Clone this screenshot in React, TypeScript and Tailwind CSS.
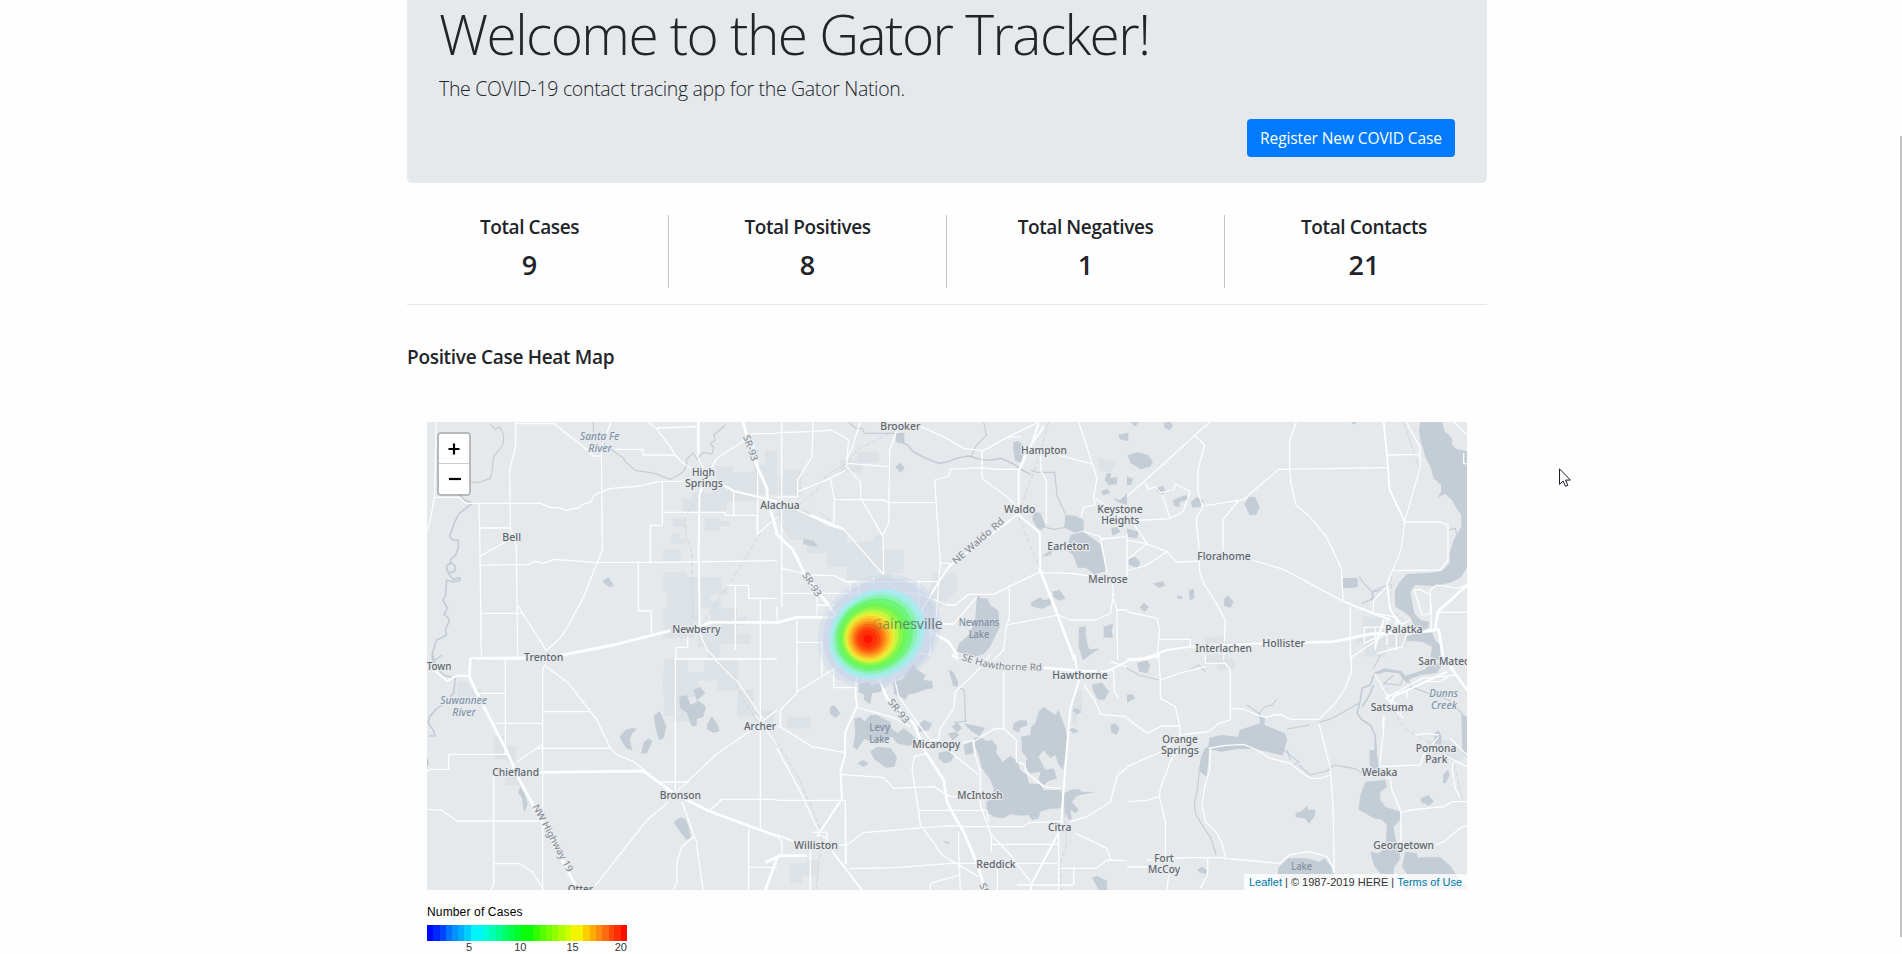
import React from "react";

type Label = [text: string, x: number, y: number, width: number, kind?: "water" | "lake"];

interface Tile {
  x: number;
  y: number;
  urban: string;
  water: string;
  rivers: string;
  streams: string;
  rails: string;
  minor: string;
  medium: string;
  major: string;
}

// Tile geometry is stored at three units per screen pixel.
const tiles: Tile[] = [
  {
    x: 0,
    y: 0,
    urban:
      "M868 138h50v18h62v-22h70v90h-60v20h-90v28h-60v-24h-45v-30h60v-40h13zM765 235h100v40h-100zM737 293h38v28h-38zM735 340h20v15h20v16h-45v-16h5zM833 293h42v10h35v16h-32v14h-45zM709 388h52v35h-52zM709 457h70v14h105v32h20v20h-55v20h32v22h-60v40h-20v50h-92v-90h12v-50h-12zM850 565h80v25h30v26h-30v26h40v30h-90v40h-38v-30h-30v-50h38zM1015 90h35v60h-35z",
    water: "M525 484l12-8l10-4l3 10l8 8v10h-14l-6-6z",
    rivers:
      "M100 225l8 12l27 13l-40 32l-12 25l-15 42l8 10l18 2v22l-8 22l-14 12l-2 12l-12 10l2 15l12 5l13-8l-2-14l-8-8l-12 4l-4 10l6 18l14 18l20-6v8l-22 5l-18-6l-4 50l-8 10l14 24l-10 20l16 12l-2 12l-10 20l3 18l-30 15l-12 40l8 30",
    streams:
      "M130 186l25 1l35-12l5-20l5-45l28-35l2-30l-12-25l-12 8l-16-14M498 6l2 34l40 40l50 35l5 10l30 26l40 6l20 4l45 17l20-10l20-14l10-20l-2-15l20-20l12 18l20-20l25 5l5-20l-10-12l15-10l-5-15l35-30",
    rails: "M830 215L790 265L775 300L778 350L795 400L797 590L815 615M1050 285L990 352L960 405L940 440L830 605L818 645L840 690L862 715",
    minor:
      "M0 335L12 290L22 232L28 6M22 232H98L115 250H155L158 325L163 710M115 250H340L370 262L395 263L418 272L430 267L455 264L465 254L492 245L500 228L512 220L548 206L640 198L680 188L706 184H800M266 6V80L248 150L250 325L268 380L272 710M158 324H250M160 408L250 358M162 436L305 433L325 424L350 430L380 418L425 421L500 427H700L1050 422M162 580H286M272 556L358 692L405 648L425 615L470 530L510 430L526 390L523 80L552 6M266 11H382L430 50L455 68L500 108H520M565 88H648V105H742M665 6L690 28L730 80L745 105L765 127L830 170M690 24L810 20M812 6V110L840 170M840 170L855 140L870 115L950 62L975 41H1050M706 184V316H670V427M706 277H893L895 286H990V340M634 430V573H673V640M920 213V284M992 340V130L975 60M900 496H965V535H1050M925 496V690M1000 535V710M782 650V682H747V720M990 345L1050 290M818 640L840 690L870 720",
    medium: "M815 6V100M860 180L920 213L1020 237L1050 245M825 200L817 230L815 400L818 600L815 625M145 716H300",
    major: "M818 620L850 607H1050M730 632L560 675L380 710M948 6L975 105L1020 205L1022 240L1050 338",
  },
  {
    x: 1050,
    y: 0,
    urban:
      "M20 150h55v75h-70v-55h15zM190 120h50v-25h65v32h-50v30h-65zM0 270h90l60 50l60 10v35h80v-20h30v45h60v70h-40v20h-130v-40h-60v-40h-60v-40h-50l-30-50zM470 460h70v50l-60 60h-40zM960 112l55 15l-12 30l-35-5z",
    water:
      "M357 40l25-2v30l-18 2l-8-8zM355 140l14-12l14 15l-12 16zM708 68l14-6l14 10v20l8 14l-12 22l-18-6l-5-30zM770 275l20 4l16 40l-14 12l-12-8l-14-25zM866 284l30 4l24 12v30l-25 8l-34-15zM880 345l40-10l50 38l18 80l-36 10l-26-20h-24l-12-34l-20-20zM795 410l20-16l14-5l-8 16zM600 526l12 8l20 2l8 20l24 16l4 50l-30 60l-18 20l-30 10l-52-18l10-26l30-25l16-40zM760 548l30-16l8 8l24-4v18l-26 12l-30-6zM828 514l20-4l18 26l-20 6l-18-12zM906 622l20-4v30l10 40l32-2l-25 16l-26 18l-12-40zM980 620l30-10l-6 20l4 24l-28-2zM80 357l30 5l12 18l-20-2l-24-6zM1024 44l30-5v25l-26-6zM990 160h12v14l18-2v20l-25 4l-12-15zM972 212l20-4l8 12l-22 6zM1010 235l20 5l20-20v34l-30-8zM1003 325l16-4l12 14l-25 12z",
    rivers: "M365 62l25 12l20 22l40 20l36 14l25-4l30-12l35-6l40 12h30l25-5l40 18l30 20l20 10",
    streams:
      "M215 6l20 18l20 2l8 14h90M620 6l8 40l-30 30l-15 35M760 150l20 7h53l7 70l25 55M800 320l30 8l35-6",
    rails: "M360 30L240 90L210 130L150 165L120 210L60 260M815 6L780 130L745 220L725 290L790 450M130 280L200 330L320 465L400 545",
    minor:
      "M0 38L100 35L165 30L215 60L208 140L250 185L252 235L318 350L320 465M108 6L105 110L62 180V230L0 232M250 6L225 85L208 120M360 30L338 90L335 310L318 345M62 215L160 175L208 150M210 130L335 140M160 175L172 240L170 320M170 238L325 240L335 248H475M14 6V560M0 560V600M430 20L500 50L560 85L615 92L632 85L690 52L730 50M690 52L785 6M615 92V175L690 230L730 270M475 620L490 430L473 180L515 168L520 148L610 143L660 148H730M740 78L950 133M905 6L960 175L950 230L955 255L920 262L912 290M790 100L792 155L808 180V310M490 430H520M14 445L100 465L170 467L208 485H488M14 520H425L510 555H535L575 523H650L790 455M120 520V585M245 485V595M425 485V600M60 600V720M60 667H135V720M425 600V700L460 705V620M790 458L880 460L1000 475M697 495V595L688 615L680 690L650 720M688 615L845 585L880 600H955L1000 580L1010 520L1000 460M470 612H530L600 530M1005 520L1020 570L1022 720M920 335L970 350L990 460M970 357L1050 350M955 235L1050 300M60 270L170 320L200 328L320 465M0 605L30 600L65 590M220 485L220 530M1020 570H1050M350 500L380 560M290 500V470M300 540V600M120 555L170 556M1050 340V480",
    medium: "M100 285L200 327M785 8L765 70L725 155V260L725 285L788 338L790 455M430 580L470 510L515 440L720 285M725 155L745 100L800 20",
    major: "M-5 338L48 390L80 455L180 590M0 608L60 592H175M787 445L840 580L893 720M455 632L515 665L540 705",
  },
  {
    x: 2100,
    y: 0,
    urban: "M708 590h60v40h70v50h-60v30h-65v-40h-30v-22h25zM235 650h60v15h80v30h-145z",
    water:
      "M880 6H945L953 34L975 54V74L989 88L1020 93V443L1000 473L970 488L920 498L865 495L850 515L855 545L862 580L880 600L905 605V622L885 635L860 615L850 590L825 572L805 560L803 515L815 490L840 462L910 458L945 452L968 430V400L980 360L1003 320V285L990 268L975 240L955 222L940 228L930 236L942 215V195L920 175L912 145L895 110L880 60L876 30ZM2 105l30-8l30 8l16 20l-8 15l-30 8l-30-20zM110 8l20-2l8 12l-10 12l-15-6zM10 6h25l-10 14zM352 252l14-20l18-2l14 32l-10 22l-20 2zM648 474h44v28l-20 2h-24zM88 205l20-8l8 14l-10 12l-15-6zM138 240l20-8l20-6l8 12l-28 8v15l-16-4zM192 245l18-14l20 10l-10 20l-24 2zM5 415l20-4l15 15l-8 18l-26-10zM78 490l30-6l6 14l-20 6zM150 526l16 4v8l-14-2zM186 510l14-4l2 30l-14 4zM290 540l12-14l18 20l-10 18l-18-6zM38 562l14-14l14 14l-14 14zM835 650l50-14l30 2l10 24l15 12v46h-30l5-40l-30-15l-45-2zM0 170l18 5l-5 20h-13zM0 325l35 10l-5 20l-30-4zM670 6h18l-6 8z",
    rivers: "",
    streams: "M697 470l15 22l25 25l5 18l-38 15M740 515l30-5l20-20M735 540v-25l45-20M965 330l20-5l5 20",
    rails: "M830 6L878 150L833 305L822 390L795 450L790 570L830 600",
    minor:
      "M248 6L0 230M205 48L233 75L213 150V218L228 262L207 295L215 370L218 455L230 490L268 550L295 600L290 720M55 190L65 208L85 200L100 218L140 210L145 192L190 215L168 275L130 296L105 225M130 296L0 303M230 258L350 238L455 148L780 143M335 242L288 298V400M508 6L488 65V150L492 190L507 255L550 292L598 350L643 445L648 540M375 420L470 448L650 545M0 360L55 370L120 395L150 427L218 423M120 395L60 435L0 453M20 310L60 370L0 420M780 105L880 103M838 6L878 80L880 140L833 305L822 390L780 490M833 305L940 306L963 315V420L940 450L800 452M670 560V720M93 658H190V678M0 575L90 595L98 630L90 720M740 580L800 590L840 640L825 680L750 700M712 622V670L850 600M745 620V690M780 600V675M675 710L780 640M808 600V690M712 622L800 620M862 510L885 585L910 580V510L930 495L990 505L1020 495M862 510L880 508L910 525M913 550V630M932 577H1020M780 500L740 540L738 580M980 6L1020 45M1010 100V130L1020 132",
    medium: "M770 6L780 105L788 210L833 305M650 545L790 600M780 490L790 570L835 630M0 718L50 715L120 690L190 680L300 675L410 670M745 680L770 600",
    major: "M410 672L620 665L730 642L890 635L935 628L950 720M925 625L933 575L1020 495",
  },
  {
    x: 0,
    y: 705,
    urban: "M90 80h35v22h40v25h-75zM202 243h30v30h35v50h-30v-10h-35zM235 345h50v45h-50zM712 12h70v40h50v-35h100v90h-60v-30h-60v50h-30v55h-70v-70h-5zM930 105h50v60h60v50h-60v-30h-50zM740 180h50v20h-50z",
    water:
      "M586 235l12-12l20-4l12 4l-14 12l-8 20l8 30l-14-2l-14-16l-10-22zM650 262l14-12l12 8l-16 36l-18 2zM680 182l18-14l10 22l10 25l-8 35l-14 6l-10-35zM757 125l22-5l12 30l20-10l-12-35l20-10l16 20l-24 20l26 20l-8 30l-20 8v20h-15l-15-40l-20-15zM840 210l14-26l18 25l6 20l-20 4l-18-10zM740 502l20-15l16 6l10 25l5 30l-12 6l-20-24zM280 395l12 20l10 30l-10 28l-4-20l-2-22l-12-18zM0 305l6 15l-4 15h-2z",
    rivers: "M15 0l5 30l30 30l35 10l-5 45l-30 30l-20 15l-22 25l-4 20l15 20l5 18l-18 0",
    streams: "M45 0l-20 15",
    rails: "M850 5L920 70L955 145L1050 270M930 80L1000 180",
    minor:
      "M235 5V298M150 115H235M205 205H347M347 705V45L358 20M348 170H487M325 280H550M0 350L10 343H65V298H240M270 320L347 268M358 35L425 85L510 195L550 280L570 300L620 320L655 348M200 350V690L190 705M0 463L45 466L60 478L90 498H340M203 626H280L315 650L350 705M745 0V410M748 12H1050M725 440L660 495L505 692M700 381H785M750 410L865 300L960 235L1050 165M765 440L808 560L828 705M800 545L765 575L750 620V680L740 705M845 470L885 433H1050M1000 0V520M965 520V705M968 637H1050M860 10L935 85L1010 195M985 180L1050 270",
    medium: "M0 30L40 60L60 78L90 62H122M128 10L355 6",
    major: "M130 10L127 65L150 115L240 290L275 370L350 510L450 700M340 352L650 348L740 415L845 468L1050 543M1050 610L1015 705",
  },
  {
    x: 1050,
    y: 705,
    urban: "M30 185h70v35h-75zM40 625h50v-10h35v50h-50v20h-35zM890 110h25v60h-15v40h-15z",
    water:
      "M245 88L270 80L285 92L315 82L325 95L310 110L285 115L280 148L262 135L260 118L245 112ZM348 82L378 72L400 40L410 30L422 45L445 60L440 75L465 78L468 100L440 105L415 115L395 118L385 135L370 125L352 118ZM232 192L250 186L262 200L280 180H300L315 190L340 200L345 222L362 234L380 220L400 235L415 250V268L390 272L360 265L345 245L320 258L290 262L262 252L250 270L240 285L228 275L235 235ZM280 290l20-15l40 3l20 28l-8 30l-25 2l-35-25zM242 325l15-10l18 10l-14 12zM485 293l25-5l22 12l-10 20l-20 5l-18-14zM160 155l12-5l18 25l-14 15l-18-15zM425 210l15-15l26 10l-10 20l-30 6zM515 45l14 5l14 30v15l-14-2zM512 235l25-5l10 10l-20 16zM525 215l15-15l15 20l-15 12zM560 205l25 5l40 8l-18 25l-25-15zM560 270l25-10l5 35l-25 5zM592 248L612 246L628 258L646 255L661 277L657 292L677 322L700 302L722 318L730 345L750 360L755 385L790 388L800 405L850 405L858 425L850 460L815 462L790 470L785 490L765 495L755 480L730 482L700 478L680 490L650 485L628 470V440L648 425L650 400L640 375L615 340L605 300L592 270ZM800 155L820 170L835 180L845 165L865 220L870 250L865 300L858 345L845 330L835 300L820 310L800 285L785 305L805 345L830 340L840 370L815 378L800 390L785 375L790 350L760 355L745 335L750 310L735 290L732 245L760 240L762 215L775 205L785 170ZM860 415L880 405L905 402L915 410L955 411L900 422L885 440L905 465L895 475L880 465L885 492L875 494L862 470ZM710 205l20-10l20 2v15l-20 6l-5 15l-18-10zM945 90l30-8l14 20l8 5l-15 28l-20-2l-15-30zM885 165l15-5l14 12l-14 6zM875 222l15-2l16 8l-15 8zM1000 210l14-5l14 15l-10 20l-16-10zM945 668l15-5l30 15v27h-25zM912 0h25l-15 12z",
    rivers: "",
    streams: "M545 98l14 5l4 15l2 80M530 202l40-4M500 560l15 2l-5 5",
    rails: "M0 260L60 360L110 470L135 540L118 705M862 450L868 570L852 620V705",
    minor:
      "M60 0V115M60 110L190 30M10 165L60 115M10 165V215L0 215M10 215L105 275L200 292M135 0V60M170 40V98H240M0 280L70 410L130 540L150 550M0 436H205L208 628M190 358L320 368L350 400L470 395L520 425H610M450 295L412 305L405 340L425 470L430 510L460 550L495 600L605 665M425 466H630L635 500M170 570H210L258 533L520 512L560 515H740L755 503L850 500M215 641L360 638L520 625H840M108 532H150V560M100 570V705M240 157L350 188L400 215M345 40L365 125L430 215L460 255L485 255L490 220L530 160L535 110L598 50L640 0M680 45V220L650 222L590 260L595 300L610 350V450L640 535L700 600L760 680M680 220L718 255V320L745 330V350L800 395L850 400M550 265L590 255M520 290L605 360M643 535V590M645 568H845M545 530V600L550 705M548 635V660L460 685V705M880 500L930 485L1000 440L1022 360L1050 338M895 535L990 580L1003 618M845 540V705M850 640H960L990 615L1050 617M720 690H890M890 690V635M661 625V705M920 90L950 130L972 178L1050 185M970 50L1010 45L1012 110L1025 130M1000 20L1050 35M0 545L15 560V600M205 628V440",
    medium: "M240 60L235 110L240 155L205 230L204 300L190 350L195 430L120 545M165 588L255 705M0 540L60 562M975 55L1050 20M893 0L905 80L880 160L860 400L852 520L762 690V705",
    major: "M300 55L330 130L410 205L445 290L500 375L510 440L530 480L560 530L600 625L625 705M525 0L545 12M800 38L890 46L960 50M-35 622L10 602H90",
  },
  {
    x: 2100,
    y: 705,
    urban: "M235 0h65v10h22v35h-50v-20h-37zM900 255h80v20h30v40h-65v-15h-45z",
    water:
      "M30 25l30-10l10 15l-8 25l-25-5zM0 120l15-3l10 12l-25 15zM248 248l35-8l50 5l5-20l60-20v-20h15v25l60 25l8 20l-8 25l-5 22l-40-10l-45-10h-50l-50 8l-40-8zM232 285l15-15l-2 40l-6 55l-20-15v-30l5-20zM505 475l20-8l15-15l5 12h20l-2 20l-18 22l-10-15l-28-5zM715 380l60-5l5 20l-20 15v25l15 20l45 15v25l-20 20l5 35l10 20l5 40l-20 30v45l-15 35l-15-50l-30-40l-10-40l25 5l20-20l5-65l-15-15l-25-5l-25-15l-20-10l5-45zM850 625l30-18h60l30 25l30 45l20 15v13h-190zM835 590l35 5l5 20l-30 50l-20-30zM880 430l25-10l15 20l-15 12l-22-10zM948 360l15-15l5 15l-12 25h-8zM922 235l12-10l10 20l-2 25l-20-5zM728 285h20l8 50l-12 15l-16-20zM453 640l30-30h55l40 10l15-10l20 25l8 40h-168zM210 645l15-10l14 10l-2 12l-20-5zM738 55l35-15l50 8l12 15l60-20l10-15l45-5l-20 30l-50 8l-30 10l-10 14l-25-30l-40-5l-20 8zM1003 175l17 12v120l-14-15z",
    rivers:
      "M740 60l-10 30l-25 10l-5 35l-10 40l15 20l25 15l14 30l4 50M740 90l-15 35l-20 30M745 240V290",
    streams:
      "M575 203l40-13l45-25l35-20M480 222l70-12M360 150l35 25l20-20l20-5l15-18M398 170V190M465 280l30 25l20 15l-15 10M480 285l10 30M235 280l-18 60l-5 60l-10 50l5 30l25 40l20 30l15 50M515 330l35 30l50-12l20-18l60 10l40 20M800 60l-30 25l50 5l10-25l20 20v20M850 95l55 20l60 20l40 40l5 20M180 50l35-20l20 20M0 40l35 20l60 15M760 0l-20 40",
    rails: "M745 60L780 130L830 220L900 260L980 320L1005 430",
    minor:
      "M0 190L60 235L105 213H155M0 335L115 285L160 240L158 210L145 155L100 130V75L155 55L235 35M95 0L100 75M235 0V25H295L310 45V195L275 205L245 230L160 240M310 160L350 162L395 182L420 187L440 180H465L490 193H575L625 145L655 100L673 50V0M245 280L290 272L350 268L390 285L430 310L490 325L520 350L550 370H580L610 360M575 203L610 340L618 450L622 655M250 280L248 345L235 385L225 450L235 500L270 535L285 565L296 610M290 610L380 618L460 625L490 598L550 590L600 605L620 640M0 440L60 436L97 425L100 400L130 320L160 270M97 425L115 500V605M60 615L180 608L290 608M242 610V660L220 700M125 660L120 705M770 190V225L758 330L755 360L790 370L795 405L822 470V560M745 60L800 160L830 190M820 175L835 160L775 130L885 70L990 60M760 335L880 330L890 300L935 245M822 473L850 465L950 455L975 440H1020M925 570L950 560L1000 518L1020 513M980 320L975 345L985 400L1000 430M950 300L1020 335M865 240L900 235L935 240M840 130V110L780 120M900 80H940L970 60M970 250L1020 300M0 636H60",
    medium: "M790 150L800 125L960 50M770 185L768 220",
    major: "M970 35L1020 105M0 15L50 12L100 0",
  },
];

const labels: Label[] = [
  ["Santa Fe", 518, 59, 118, "water"],
  ["River", 519, 95, 70, "water"],
  ["High", 829, 167, 68],
  ["Springs", 831, 200, 114],
  ["Bell", 254, 362, 56],
  ["Newberry", 808, 638, 145],
  ["Trenton", 350, 722, 118],
  ["Alachua", 1059, 267, 118],
  ["Brooker", 1420, 29, 120],
  ["Hampton", 1851, 102, 138],
  ["Waldo", 1778, 278, 94],
  ["Earleton", 1924, 389, 126],
  ["Keystone", 2079, 278, 137],
  ["Heights", 2080, 311, 114],
  ["Melrose", 2043, 488, 118],
  ["Newnans", 1656, 618, 122, "lake"],
  ["Lake", 1656, 654, 62, "lake"],
  ["Florahome", 2391, 419, 160],
  ["Interlachen", 2390, 695, 170],
  ["Hollister", 2570, 680, 128],
  ["Palatka", 2931, 639, 112],
  ["San Mateo", 3052, 735, 156],
  ["Town", 36, 749, 74],
  ["Suwannee", 110, 851, 140, "water"],
  ["River", 111, 887, 70, "water"],
  ["Archer", 999, 929, 96],
  ["Chiefland", 266, 1067, 140],
  ["Bronson", 760, 1136, 124],
  ["Otter", 460, 1419, 76],
  ["Hawthorne", 1959, 776, 166],
  ["Levy", 1358, 933, 62, "lake"],
  ["Lake", 1357, 969, 60, "lake"],
  ["Micanopy", 1528, 984, 144],
  ["McIntosh", 1659, 1137, 136],
  ["Citra", 1898, 1233, 70],
  ["Williston", 1167, 1286, 132],
  ["Reddick", 1707, 1343, 118],
  ["Dunns", 3050, 831, 86, "water"],
  ["Creek", 3051, 867, 78, "water"],
  ["Satsuma", 2895, 872, 128],
  ["Pomona", 3027, 995, 122],
  ["Park", 3028, 1028, 66],
  ["Welaka", 2858, 1067, 106],
  ["Georgetown", 2930, 1286, 182],
  ["Orange", 2259, 968, 106],
  ["Springs", 2259, 1002, 114],
  ["Fort", 2211, 1325, 58],
  ["McCoy", 2211, 1358, 96],
  ["Lake", 2624, 1349, 62, "lake"],
];

const roadNames: [string, number, number, number, number][] = [
  ["SR-93", 971, 84, 80, 70],
  ["SR-93", 1155, 493, 80, 57],
  ["NE Waldo Rd", 1653, 363, 195, -41],
  ["SR-93", 1415, 873, 84, 52],
  ["NW Highway 19", 378, 1254, 225, 62],
  ["SR-93", 1680, 1428, 80, 70],
];

const heatStops: [number, number, number, number, string, number][] = [
  [208, 200, 192, 164, "#c3d1e6", 0.3],
  [210, 200, 178, 152, "#bfcee8", 0.4],
  [201, 207, 150, 130, "#a6ebf0", 0.8],
  [199, 208, 140, 121, "#98f0dc", 0.75],
  [197, 208, 130, 113, "#86f3a8", 0.8],
  [194, 209, 120, 105, "#6cf476", 0.9],
  [190, 211, 106, 95, "#6bf653", 0.9],
  [187, 213, 94, 86, "#90f548", 0.95],
  [184, 215, 84, 78, "#c2f53e", 0.95],
  [181, 217, 76, 72, "#e6ee38", 1],
  [179, 218, 68, 65, "#fad02c", 1],
  [178, 219, 60, 58, "#fbb024", 1],
  [177, 220, 52, 51, "#fb8c1b", 1],
  [176, 220, 44, 44, "#fc6812", 1],
  [175, 221, 36, 36, "#fd470b", 1],
  [174, 221, 27, 27, "#fe3007", 1],
  [174, 222, 13, 13, "#ff1200", 1],
];

const legend: [number, string][] = [
  [18, "#0008ff"],
  [21, "#0026ff"],
  [17, "#0044ff"],
  [19, "#0070ff"],
  [18, "#0090ff"],
  [18, "#00acff"],
  [21, "#00ccff"],
  [36, "#00f4f8"],
  [19, "#00ffd8"],
  [20, "#00ffb4"],
  [18, "#00ff90"],
  [18, "#00ff6c"],
  [19, "#00ff4c"],
  [20, "#00ff2c"],
  [36, "#08ff08"],
  [21, "#30ff00"],
  [18, "#54ff00"],
  [18, "#74ff00"],
  [18, "#90ff00"],
  [21, "#b0ff00"],
  [18, "#d0ff00"],
  [36, "#f4f400"],
  [21, "#ffcc00"],
  [18, "#ffac00"],
  [18, "#ff8c10"],
  [21, "#ff6c10"],
  [16, "#ff4808"],
  [20, "#ff2c04"],
  [18, "#ff0c00"],
];

const stats = [
  { label: "Total Cases", value: 9 },
  { label: "Total Positives", value: 8 },
  { label: "Total Negatives", value: 1 },
  { label: "Total Contacts", value: 21 },
];

function labelClass(kind?: string) {
  if (kind === "water") return "fill-[#7f95aa] italic font-medium text-[31px]";
  if (kind === "lake") return "fill-[#7f8fa0] font-medium text-[30px]";
  return "fill-[#5f666c] font-medium text-[33px]";
}

function HeatMap() {
  return (
    <svg
      viewBox="0 6 3120 1404"
      className="block h-[468px] w-[1040px] bg-[#e5e9ec] font-['Noto_Sans',sans-serif]"
      fill="none"
      strokeLinejoin="round"
    >
      <defs>
        <linearGradient id="city-fade" gradientUnits="userSpaceOnUse" x1="1335" y1="0" x2="1547" y2="0">
          <stop offset="0" stopColor="#8a7a3a" stopOpacity="0.25" />
          <stop offset="0.2" stopColor="#4f7a4a" stopOpacity="0.7" />
          <stop offset="0.55" stopColor="#5b8078" stopOpacity="0.95" />
          <stop offset="0.8" stopColor="#6a7278" />
        </linearGradient>
      </defs>
      {tiles.map((t) => (
        <g key={`${t.x}-${t.y}`} transform={`translate(${t.x} ${t.y})`}>
          <path d={t.urban} fill="#dde2e6" />
          <path d={t.water} fill="#c4ccd5" />
          <path d={t.rivers} stroke="#c4ccd5" strokeWidth={5} />
          <path d={t.streams} stroke="#c4ccd5" strokeWidth={3.5} />
          <path d={t.rails} stroke="#d0d6dc" strokeWidth={3} strokeDasharray="16 7" />
        </g>
      ))}
      {tiles.map((t) => (
        <g key={`r${t.x}-${t.y}`} transform={`translate(${t.x} ${t.y})`} stroke="#fdfefe">
          <path d={t.minor} strokeWidth={3.8} />
          <path d={t.medium} strokeWidth={6} />
          <path d={t.major} strokeWidth={8.5} />
        </g>
      ))}
      {labels.map(([text, x, y, w, kind], i) => (
        <text
          key={i}
          x={x}
          y={y}
          textAnchor="middle"
          textLength={w}
          lengthAdjust="spacingAndGlyphs"
          className={labelClass(kind)}
          stroke="#e8ebee"
          strokeWidth={kind === "lake" ? 0 : 7}
          paintOrder="stroke"
        >
          {text}
        </text>
      ))}
      {roadNames.map(([text, x, y, w, r], i) => (
        <text
          key={i}
          transform={`translate(${x} ${y}) rotate(${r})`}
          y={10}
          textAnchor="middle"
          textLength={w}
          lengthAdjust="spacingAndGlyphs"
          className="fill-[#80868b] text-[29px]"
          stroke="#e8ebee"
          strokeWidth={6}
          paintOrder="stroke"
        >
          {text}
        </text>
      ))}
      <path id="hawthorne-rd" d="M1603 719Q1680 748 1750 750T1860 751" />
      <text className="fill-[#80868b] text-[29px]" stroke="#e8ebee" strokeWidth={6} paintOrder="stroke">
        <textPath href="#hawthorne-rd" textLength={246} lengthAdjust="spacingAndGlyphs">
          SE Hawthorne Rd
        </textPath>
      </text>
      <g transform="translate(1149 435)">
        {heatStops.map(([cx, cy, rx, ry, color, opacity], i) => (
          <ellipse
            key={i}
            cx={cx}
            cy={cy}
            rx={rx}
            ry={ry}
            transform={`rotate(-32 ${cx} ${cy})`}
            fill={color}
            fillOpacity={opacity}
          />
        ))}
      </g>
      <text
        x={1441}
        y={628}
        textAnchor="middle"
        textLength={212}
        lengthAdjust="spacingAndGlyphs"
        className="text-[41px]"
        fill="url(#city-fade)"
      >
        Gainesville
      </text>
    </svg>
  );
}

function ZoomControl() {
  return (
    <div className="absolute top-2.5 left-2.5 rounded-[4px] border-2 border-black/20 bg-clip-padding">
      <button className="flex h-[30px] w-[30px] items-center justify-center rounded-t-[2px] border-b border-[#ccc] bg-white">
        <svg viewBox="0 0 12 12" className="h-3 w-3 stroke-black" strokeWidth={2.2}>
          <path d="M6 0.5v11M0.5 6h11" />
        </svg>
      </button>
      <button className="flex h-[30px] w-[30px] items-center justify-center rounded-b-[2px] bg-white pl-0.5">
        <svg viewBox="0 0 12 12" className="h-3 w-3 stroke-black" strokeWidth={2.2}>
          <path d="M0 6h12" />
        </svg>
      </button>
    </div>
  );
}

export default function App() {
  return (
    <div className="relative flex h-[954px] w-full justify-center overflow-hidden bg-[#fefefe] pr-[8px] font-['Open_Sans',sans-serif] text-[#212529]">
      <main className="w-[1080px]">
        <header className="flex h-[183px] flex-col rounded-b-[5px] bg-[#e5e9ec] px-8">
          <h1 className="h-[75px] text-[55px] leading-[68px] font-light tracking-[-1.55px] whitespace-nowrap">
            Welcome to the Gator Tracker!
          </h1>
          <p className="h-[44px] text-[19.5px] leading-[28px] font-light tracking-[-0.32px]">
            The COVID-19 contact tracing app for the Gator Nation.
          </p>
          <button className="h-[38px] w-[208px] self-end rounded-[4px] bg-[#007bff] pt-0.5 text-[15.5px] tracking-[-0.1px] whitespace-nowrap text-white">
            Register New COVID Case
          </button>
        </header>

        <section className="-mx-4 mt-8 grid h-[73px] grid-cols-4">
          {stats.map((s, i) => (
            <div
              key={s.label}
              className={i < 3 ? "border-r border-[#c3c5c6] text-center" : "text-center"}
            >
              <h5 className="h-8 text-[19px] leading-[25px] font-semibold tracking-[-0.4px]">{s.label}</h5>
              <h3 className="text-[27px] leading-[35px] font-semibold">{s.value}</h3>
            </div>
          ))}
        </section>
        <hr className="mt-4 border-[#e5e8eb]" />

        <h5 className="mt-10 h-[25px] text-[19px] leading-6 font-semibold tracking-[-0.3px]">Positive Case Heat Map</h5>

        <section className="mt-[52px] ml-5 w-[1040px]">
          <div className="relative">
            <HeatMap />
            <ZoomControl />
            <div className="absolute right-0 bottom-0 flex h-4 w-[223px] items-center justify-center bg-white/80 font-['Liberation_Sans',sans-serif] text-[11px] whitespace-pre text-[#333]">
              <a className="text-[#0078a8]">Leaflet</a>
              {" | © 1987-2019 HERE | "}
              <a className="text-[#0078a8]">Terms of Use</a>
            </div>
          </div>
          <div className="mt-[15px] w-[200px] font-['Liberation_Sans',sans-serif] text-black">
            <div className="h-5 text-[12px] leading-[15px] tracking-[0.15px]">Number of Cases</div>
            <div className="flex h-4">
              {legend.map(([w, color]) => (
                <div key={color} style={{ flexGrow: w, backgroundColor: color }} />
              ))}
            </div>
            <div className="flex justify-between pl-[39px] text-[11px] leading-[13px] text-[#333]">
              <span>5</span>
              <span className="pl-1.5">10</span>
              <span className="pl-1">15</span>
              <span>20</span>
            </div>
          </div>
        </section>
      </main>

      <div className="absolute top-[136px] right-0 h-[801px] w-[2px] bg-[#c1c1c1]" />
      <svg viewBox="0 0 12 19" className="absolute top-[468px] left-[1559px] h-[19px] w-[12px]">
        <path
          d="M.5 .8v15.6l3.6-3.4 2.4 5.3 2.3-1-2.3-5.2h4.9z"
          fill="#fff"
          stroke="#1c1f26"
          strokeWidth={1}
        />
      </svg>
    </div>
  );
}
